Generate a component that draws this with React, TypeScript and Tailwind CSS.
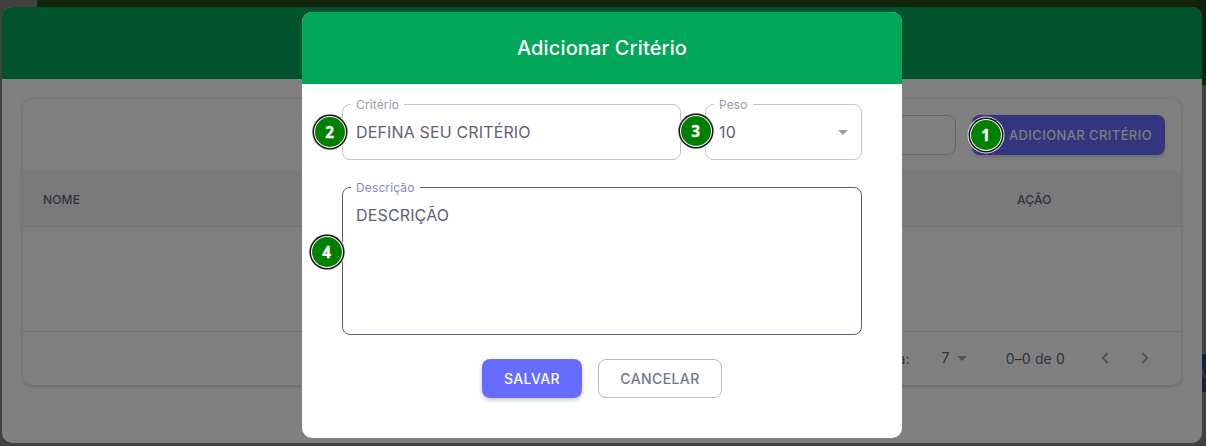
import type { ReactNode } from "react";

function Badge({ n, className }: { n: number; className: string }) {
  return (
    <span
      className={`absolute flex size-[30px] items-center justify-center rounded-full bg-[#008000] font-['Noto_Sans',sans-serif] text-base font-bold text-white shadow-[0_0_0_1px_#fff,0_0_0_2.5px_#111,0_0_0_3.5px_#e8e8e8] ${className}`}
    >
      <span className="scale-x-95 [-webkit-text-stroke:0.4px_white]">{n}</span>
    </span>
  );
}

function Caret({ className }: { className: string }) {
  return (
    <svg viewBox="0 0 10 5" className={`h-[5px] w-[10px] ${className}`} fill="currentColor">
      <path d="M0 0h10L5 5z" />
    </svg>
  );
}

function Field({
  label,
  className,
  outline,
  children,
}: {
  label: string;
  className: string;
  outline: string;
  children: ReactNode;
}) {
  return (
    <div className={`relative ${className}`}>
      <fieldset
        className={`pointer-events-none absolute inset-x-0 -top-[5px] bottom-0 rounded-lg border px-2 ${outline}`}
      >
        <legend className="h-[11px] px-[5px] text-xs leading-[11px] tracking-[0.13px]">{label}</legend>
      </fieldset>
      {children}
    </div>
  );
}

function CriteriaPanel() {
  return (
    <section className="mt-[7px] ml-[2px] flex h-[436px] w-[1200px] flex-col overflow-hidden rounded-[10px] bg-[#808080]">
      <header className="h-[72px] shrink-0 bg-[#01532d]" />
      <div className="mx-5 mt-[19px] flex h-[288px] flex-col overflow-hidden rounded-[10px] border border-[#777777] border-b-[#707074] shadow-[0_1px_3px_#6c6c72]">
        <div className="flex h-[72px] shrink-0 items-center justify-end gap-4 pr-4">
          <div className="h-10 w-[220px] rounded-lg border border-[#666666]" />
          <button className="h-10 w-[193px] rounded-lg bg-[#34357f] pt-[2px] pr-[13px] text-right text-[13px] font-medium tracking-[0.4px] whitespace-nowrap text-[#808080] shadow-[0_2px_4px_#6c6c6c]">
            ADICIONAR CRITÉRIO
          </button>
        </div>
        <div className="flex h-14 shrink-0 items-center border-b border-[#727272] bg-[#7a7a7a] pt-[2px] pl-5 text-xs font-medium tracking-[0.17px] text-[#30303c]">
          <span className="w-[974px]">NOME</span>
          <span>AÇÃO</span>
        </div>
        <div className="h-[105px] shrink-0 border-b border-[#727272]" />
        <div className="flex flex-1 items-center justify-end pr-[32px] pb-px text-sm tracking-[0.15px] text-[#30303c]">
          <span className="mt-px mr-8">Linhas por página:</span>
          <span className="mr-[7px] -mt-px">7</span>
          <Caret className="mr-[39px] text-[#50505a]" />
          <span className="mt-px mr-[36px]">0–0 de 0</span>
          <svg viewBox="0 0 8 12" className="mr-8 -mt-px h-3 w-2" fill="none" stroke="#50505a" strokeWidth="2">
            <path d="M6.7 1 1.7 6l5 5" />
          </svg>
          <svg viewBox="0 0 8 12" className="-mt-px h-3 w-2" fill="none" stroke="#50505a" strokeWidth="2">
            <path d="m1.3 1 5 5-5 5" />
          </svg>
        </div>
      </div>
    </section>
  );
}

function AddCriterionDialog() {
  return (
    <section className="absolute top-3 left-[302px] flex h-[426px] w-[600px] flex-col overflow-hidden rounded-[10px] bg-white">
      <h2 className="flex h-[72px] shrink-0 items-center justify-center bg-[#02a759] text-xl font-medium tracking-[0.13px] text-white">
        Adicionar Critério
      </h2>
      <div className="flex flex-col px-10 pt-5 text-base tracking-[0.15px] text-[#5f6078]">
        <div className="flex gap-6">
          <Field label="Critério" className="flex h-14 w-[339px] items-center px-[14px]" outline="border-[#c4c4c4] text-[#9a9aaa]">
            DEFINA SEU CRITÉRIO
          </Field>
          <Field
            label="Peso"
            className="flex h-14 w-[157px] items-center justify-between px-[14px]"
            outline="border-[#c4c4c4] text-[#9a9aaa]"
          >
            10
            <Caret className="text-[#9a9aaa]" />
          </Field>
        </div>
        <Field label="Descrição" className="mt-[27px] h-[148px] px-[14px] pt-4" outline="border-[#5d5c74] text-[#8788c8]">
          DESCRIÇÃO
        </Field>
        <div className="mt-6 flex justify-center gap-4 text-sm font-medium tracking-[0.4px]">
          <button className="h-[39px] w-[100px] rounded-lg bg-[#666cff] text-white shadow-[0_2px_4px_#c8c8d0]">SALVAR</button>
          <button className="h-[39px] w-[124px] rounded-lg border border-[#b6b8c6] text-[#6d788d]">CANCELAR</button>
        </div>
      </div>
    </section>
  );
}

export default function App() {
  return (
    <main className="relative h-[446px] w-[1206px] overflow-hidden bg-[#404040] font-['Inter',sans-serif]">
      <div className="absolute top-0 right-0 h-[85px] w-[1169px] bg-[#12230b]" />
      <div className="absolute top-[354px] right-0 flex h-[38px] w-[5px] items-center justify-end overflow-hidden bg-[#1a1b40] text-sm text-[#404040]">
        A
      </div>
      <div className="relative">
        <CriteriaPanel />
      </div>
      <AddCriterionDialog />
      <Badge n={1} className="top-[120px] left-[971px]" />
      <Badge n={2} className="top-[117px] left-[315px]" />
      <Badge n={3} className="top-[116px] left-[681px]" />
      <Badge n={4} className="top-[237px] left-[312px]" />
    </main>
  );
}
